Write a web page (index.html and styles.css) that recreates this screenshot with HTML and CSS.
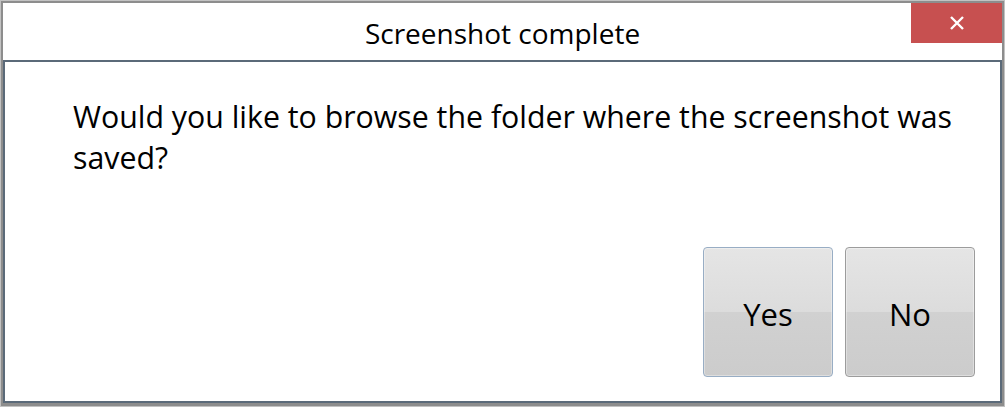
FILE: index.html
```html
<!DOCTYPE html>
<html lang="en">
<head>
    <meta charset="UTF-8">
    <title>Screenshot complete</title>
    <link rel="stylesheet" href="styles.css">
</head>
<body>
    <div class="window">
        <div class="title-bar">
            <span class="title">Screenshot complete</span>
            <button class="close-button" aria-label="Close">
                <svg width="16" height="16" viewBox="0 0 16 16">
                    <path d="M2 2 L14 14 M14 2 L2 14" stroke="#fff" stroke-width="2.4" fill="none"/>
                </svg>
            </button>
        </div>
        <div class="content">
            <p class="message">Would you like to browse the folder where the screenshot was saved?</p>
            <div class="actions">
                <button class="dlg-button default">Yes</button>
                <button class="dlg-button">No</button>
            </div>
        </div>
    </div>
</body>
</html>
```

FILE: styles.css
```css
/* finestra di dialogo */
body {
    margin: 0;
    font-family: 'Open Sans', 'Noto Sans', sans-serif;
    background-color: #fff;
    color: #000;
}

.window {
    width: 1005px;
    height: 407px;
    box-sizing: border-box;
    border: 1px solid #c2c2c2;
    background-color: #8d8d8d;
    padding: 2px 2px 3px 2px;
    display: flex;
    flex-direction: column;
}

.title-bar {
    height: 57px;
    background-color: #fff;
    position: relative;
    display: flex;
    justify-content: center;
    align-items: center;
    flex-shrink: 0;
}

.title {
    font-size: 28px;
    line-height: 38px;
    padding-top: 3px;
}

.close-button {
    position: absolute;
    top: 0;
    right: 0;
    width: 91px;
    height: 40px;
    border: none;
    background-color: #c75050;
    display: flex;
    align-items: center;
    justify-content: center;
    padding: 0;
}

.content {
    flex: 1;
    background-color: #fff;
    border: 2px solid #5b6a79;
    display: flex;
    flex-direction: column;
    justify-content: space-between;
    padding: 0 25px 24px 68px;
}

.message {
    margin: 0;
    padding-top: 34px;
    font-size: 30.3px;
    line-height: 41px;
}

.actions {
    display: flex;
    justify-content: flex-end;
    gap: 12px;
}

.dlg-button {
    width: 130px;
    height: 130px;
    box-sizing: border-box;
    border: 1px solid #9c9c9c;
    border-radius: 4px;
    background: linear-gradient(to bottom, #e5e5e5 0%, #dcdcdc 50%, #d1d1d1 50%, #cccccc 100%);
    box-shadow: inset 0 0 0 1px rgba(255, 255, 255, 0.35);
    font-family: inherit;
    font-size: 31px;
    color: #000;
    padding: 3px 0 0 0;
}

.dlg-button.default {
    border-color: #98adc4;
}
```
